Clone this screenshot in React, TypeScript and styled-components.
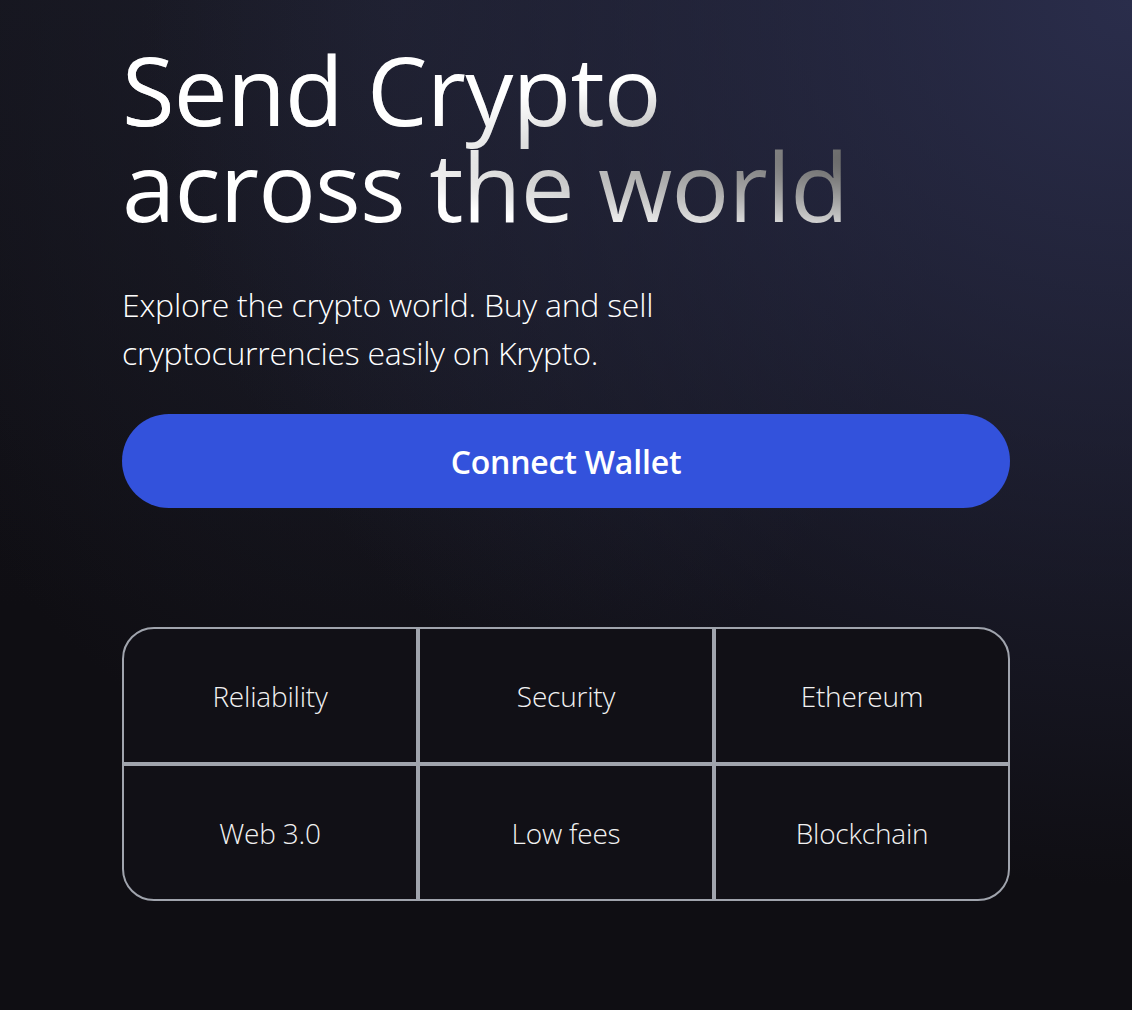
import React from "react";
import styled, { createGlobalStyle } from "styled-components";

const GlobalStyle = createGlobalStyle`
  html, body {
    margin: 0;
    padding: 0;
  }
  body {
    background-color: #0f0e13;
    font-family: "Open Sans", "Noto Sans", sans-serif;
    -webkit-font-smoothing: antialiased;
  }
`;

const Page = styled.main`
  min-height: 1010px;
  box-sizing: border-box;
  padding-top: 33px;
  background-color: #0f0e13;
  background-image:
    radial-gradient(ellipse at 100% 0%, rgba(42, 45, 75, 1) 0, rgba(42, 45, 75, 0) 62%),
    radial-gradient(ellipse at 35% 0%, rgba(28, 29, 42, 1) 0, rgba(28, 29, 42, 0) 55%),
    linear-gradient(180deg, #14141c 0%, #0f0e13 60%);
`;

const Container = styled.div`
  width: 888px;
  margin: 0 auto;
  display: flex;
  flex-direction: column;
`;

const Heading = styled.h1`
  margin: 0;
  padding: 8px 0;
  font-size: 96px;
  line-height: 96px;
  font-weight: 400;
  letter-spacing: -0.8px;
  color: #fff;
  background-color: #fff;
  background-image:
    radial-gradient(at 4% 36%, hsla(0, 0%, 100%, 1) 0, transparent 53%),
    radial-gradient(at 100% 60%, rgba(0, 0, 0, 0.78) 0, transparent 52%);
  -webkit-background-clip: text;
  background-clip: text;
  -webkit-text-fill-color: transparent;
`;

const Subtitle = styled.p`
  margin: 40px 0 0;
  width: 666px;
  font-size: 32px;
  line-height: 48px;
  font-weight: 300;
  letter-spacing: -0.24px;
  color: #fff;
`;

const ConnectButton = styled.button`
  margin-top: 37px;
  height: 94px;
  width: 100%;
  border: none;
  border-radius: 999px;
  background: #3352dc;
  color: #fff;
  font-family: "Open Sans", "Noto Sans", sans-serif;
  font-size: 32px;
  font-weight: 600;
  letter-spacing: -0.2px;
  cursor: pointer;
`;

const FeatureGrid = styled.div`
  margin-top: 119px;
  display: grid;
  grid-template-columns: repeat(3, 1fr);
`;

type CellProps = { $corner?: "tl" | "tr" | "bl" | "br" };

const Cell = styled.div<CellProps>`
  height: 137px;
  box-sizing: border-box;
  display: flex;
  align-items: center;
  justify-content: center;
  border: 2px solid #a0a4ad;
  background: #111016;
  color: #f2f2f2;
  font-size: 28px;
  font-weight: 300;
  letter-spacing: -0.2px;
  border-radius: ${({ $corner }) =>
    $corner === "tl"
      ? "32px 0 0 0"
      : $corner === "tr"
      ? "0 32px 0 0"
      : $corner === "bl"
      ? "0 0 0 32px"
      : $corner === "br"
      ? "0 0 32px 0"
      : "0"};
`;

const features: { label: string; corner?: CellProps["$corner"] }[] = [
  { label: "Reliability", corner: "tl" },
  { label: "Security" },
  { label: "Ethereum", corner: "tr" },
  { label: "Web 3.0", corner: "bl" },
  { label: "Low fees" },
  { label: "Blockchain", corner: "br" },
];

export default function App() {
  return (
    <>
      <GlobalStyle />
      <Page>
        <Container>
          <Heading>
            Send Crypto <br /> across the world
          </Heading>
          <Subtitle>
            Explore the crypto world. Buy and sell cryptocurrencies easily on
            Krypto.
          </Subtitle>
          <ConnectButton type="button">Connect Wallet</ConnectButton>
          <FeatureGrid>
            {features.map((f) => (
              <Cell key={f.label} $corner={f.corner}>
                {f.label}
              </Cell>
            ))}
          </FeatureGrid>
        </Container>
      </Page>
    </>
  );
}
